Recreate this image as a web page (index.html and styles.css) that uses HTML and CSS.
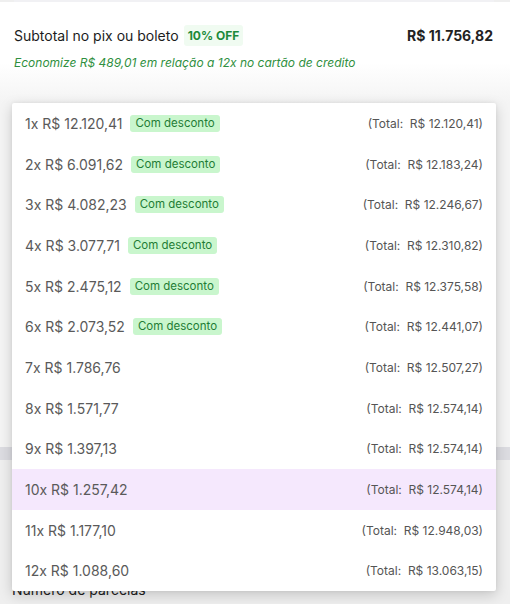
FILE: index.html
```html
<!DOCTYPE html>
<html lang="pt-BR">
<head>
    <meta charset="UTF-8">
    <meta name="viewport" content="width=device-width, initial-scale=1.0">
    <title>Parcelamento</title>
    <link rel="stylesheet" href="styles.css">
</head>
<body>
    <div class="top-card"></div>

    <div class="summary">
        <div class="summary-row">
            <div class="summary-label">
                Subtotal no pix ou boleto
                <span class="off-badge">10% OFF</span>
            </div>
            <div class="summary-price">R$ 11.756,82</div>
        </div>
        <div class="savings">Economize R$ 489,01 em relação a 12x no cartão de credito</div>
    </div>

    <div class="payment-card"></div>
    <div class="payment-band"></div>
    <div class="payment-body">
        <label class="field-label">Número de parcelas</label>
    </div>

    <ul class="installments">
        <li class="option"><span class="amount">1x R$ 12.120,41</span><span class="discount">Com desconto</span><span class="total">(Total:&nbsp; R$ 12.120,41)</span></li>
        <li class="option"><span class="amount">2x R$ 6.091,62</span><span class="discount">Com desconto</span><span class="total">(Total:&nbsp; R$ 12.183,24)</span></li>
        <li class="option"><span class="amount">3x R$ 4.082,23</span><span class="discount">Com desconto</span><span class="total">(Total:&nbsp; R$ 12.246,67)</span></li>
        <li class="option"><span class="amount">4x R$ 3.077,71</span><span class="discount">Com desconto</span><span class="total">(Total:&nbsp; R$ 12.310,82)</span></li>
        <li class="option"><span class="amount">5x R$ 2.475,12</span><span class="discount">Com desconto</span><span class="total">(Total:&nbsp; R$ 12.375,58)</span></li>
        <li class="option"><span class="amount">6x R$ 2.073,52</span><span class="discount">Com desconto</span><span class="total">(Total:&nbsp; R$ 12.441,07)</span></li>
        <li class="option"><span class="amount">7x R$ 1.786,76</span><span class="total">(Total:&nbsp; R$ 12.507,27)</span></li>
        <li class="option"><span class="amount">8x R$ 1.571,77</span><span class="total">(Total:&nbsp; R$ 12.574,14)</span></li>
        <li class="option"><span class="amount">9x R$ 1.397,13</span><span class="total">(Total:&nbsp; R$ 12.574,14)</span></li>
        <li class="option selected"><span class="amount">10x R$ 1.257,42</span><span class="total">(Total:&nbsp; R$ 12.574,14)</span></li>
        <li class="option"><span class="amount">11x R$ 1.177,10</span><span class="total">(Total:&nbsp; R$ 12.948,03)</span></li>
        <li class="option"><span class="amount">12x R$ 1.088,60</span><span class="total">(Total:&nbsp; R$ 13.063,15)</span></li>
    </ul>
</body>
</html>
```

FILE: styles.css
```css
* {
    box-sizing: border-box;
}

body {
    margin: 0;
    font-family: Inter, "Noto Sans", sans-serif;
    background-color: #efefef;
    color: #222;
    position: relative;
}

.top-card {
    height: 2px;
    margin: 0 16px 0 14px;
    background-color: #f1f1f4;
}

.summary {
    padding: 23px 17px 0 14px;
    height: 101px;
    background: linear-gradient(#fff 60%, #f4f4f4);
}

.summary-row {
    display: flex;
    justify-content: space-between;
    align-items: center;
}

.summary-label {
    font-size: 14px;
    color: #1c1c1c;
    display: flex;
    align-items: center;
    gap: 5px;
}

.off-badge {
    font-size: 12px;
    font-weight: 700;
    color: #1c8a3a;
    background-color: #f0fbf1;
    padding: 3px 4px;
    border-radius: 3px;
}

.summary-price {
    font-size: 14px;
    font-weight: 700;
    color: #222;
}

.savings {
    margin-top: 9px;
    font-size: 12px;
    font-style: italic;
    color: #2f8f40;
}

.payment-card {
    height: 344px;
    background-color: #f4f4f4;
}

.payment-band {
    height: 13px;
    background-color: #dcdce1;
}

.payment-body {
    background-color: #efefef;
    height: 144px;
    padding: 119px 12px 0;
}

.field-label {
    font-size: 14px;
    color: #222;
}

.installments {
    list-style-type: none;
    margin: 0;
    padding: 0;
    position: absolute;
    top: 103px;
    left: 12px;
    width: 484px;
    background-color: #fff;
    border-radius: 2px;
    box-shadow: 0 4px 14px rgba(0, 0, 0, 0.18), 0 0 4px rgba(0, 0, 0, 0.06);
}

.option {
    display: flex;
    align-items: center;
    height: 40.7px;
    padding: 0 13px;
    color: #5a5a5a;
}

.option.selected {
    background-color: #f5e8fd;
}

.amount {
    font-size: 14px;
}

.discount {
    margin-left: 8px;
    font-size: 11.5px;
    color: #1f7d35;
    background-color: #c9f6cd;
    padding: 1px 5px 2px;
    border-radius: 3px;
}

.total {
    margin-left: auto;
    font-size: 12px;
    color: #555;
}
```
